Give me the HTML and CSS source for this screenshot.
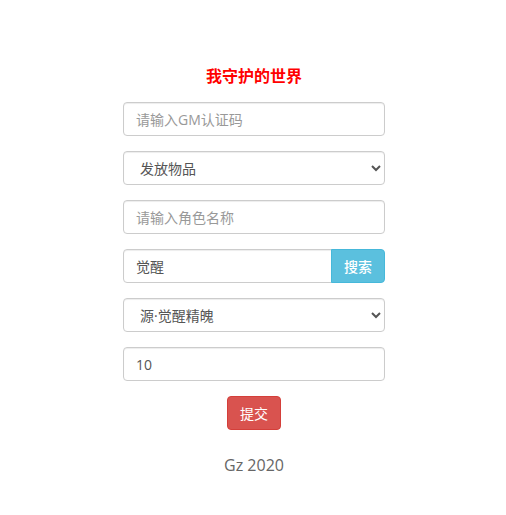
FILE: index.html
```html
<!DOCTYPE html>
<html lang="zh">
<head>
<meta charset="utf-8">
<title>我守护的世界</title>
<link rel="stylesheet" href="styles.css">
</head>
<body>
<div class="wrap">
  <h3 class="title">我守护的世界</h3>
  <form class="form">
    <input class="field" type="text" placeholder="请输入GM认证码">
    <select class="field sel">
      <option>发放物品</option>
    </select>
    <input class="field" type="text" placeholder="请输入角色名称">
    <div class="group">
      <input class="field grow" type="text" value="觉醒">
      <button type="button" class="btn info">搜索</button>
    </div>
    <select class="field sel">
      <option>源·觉醒精魄</option>
    </select>
    <input class="field" type="text" value="10">
    <div class="actions">
      <button type="button" class="btn danger">提交</button>
    </div>
  </form>
  <p class="foot">Gz 2020</p>
</div>
</body>
</html>
```
FILE: styles.css
```css
html, body {
  margin: 0;
  padding: 0;
  background: #fff;
}
body {
  font-family: "Open Sans", "Noto Sans CJK SC", sans-serif;
  font-size: 14px;
  color: #333;
}
.wrap {
  width: 262px;
  margin: 0 0 0 calc(50% - 130px);
  padding-top: 64px;
  display: flex;
  flex-direction: column;
  align-items: stretch;
}
.title {
  margin: 0 0 16px;
  text-align: center;
  color: #f00;
  font-family: "Noto Sans CJK SC", sans-serif;
  font-weight: 700;
  font-size: 16px;
  line-height: 22px;
}
.form {
  display: flex;
  flex-direction: column;
  gap: 15px;
}
.field {
  box-sizing: border-box;
  height: 34px;
  width: 100%;
  margin: 0;
  padding: 6px 12px;
  border: 1px solid #ccc;
  border-radius: 4px;
  font-family: "Open Sans", "Noto Sans CJK SC", sans-serif;
  font-size: 14px;
  color: #555;
  background: #fff;
  outline: none;
  box-shadow: inset 0 1px 1px rgba(0,0,0,.075);
}
.field::placeholder {
  color: #999;
}
.sel {
  padding-left: 12px;
}
.group {
  display: flex;
}
.grow {
  flex: 1;
  border-radius: 4px 0 0 4px;
}
.btn {
  border: 1px solid transparent;
  border-radius: 4px;
  color: #fff;
  font-family: "Open Sans", "Noto Sans CJK SC", sans-serif;
  font-size: 14px;
  height: 34px;
  padding: 0;
  cursor: pointer;
}
.info {
  background: #5bc0de;
  border-color: #46b8da;
  border-radius: 0 4px 4px 0;
  margin-left: -1px;
  width: 54px;
  font-weight: 500;
}
.actions {
  display: flex;
  justify-content: center;
}
.danger {
  background: #d9534f;
  border-color: #d43f3a;
  width: 54px;
}
.foot {
  margin: 24px 0 0;
  text-align: center;
  color: #666;
  font-size: 16px;
}
```
